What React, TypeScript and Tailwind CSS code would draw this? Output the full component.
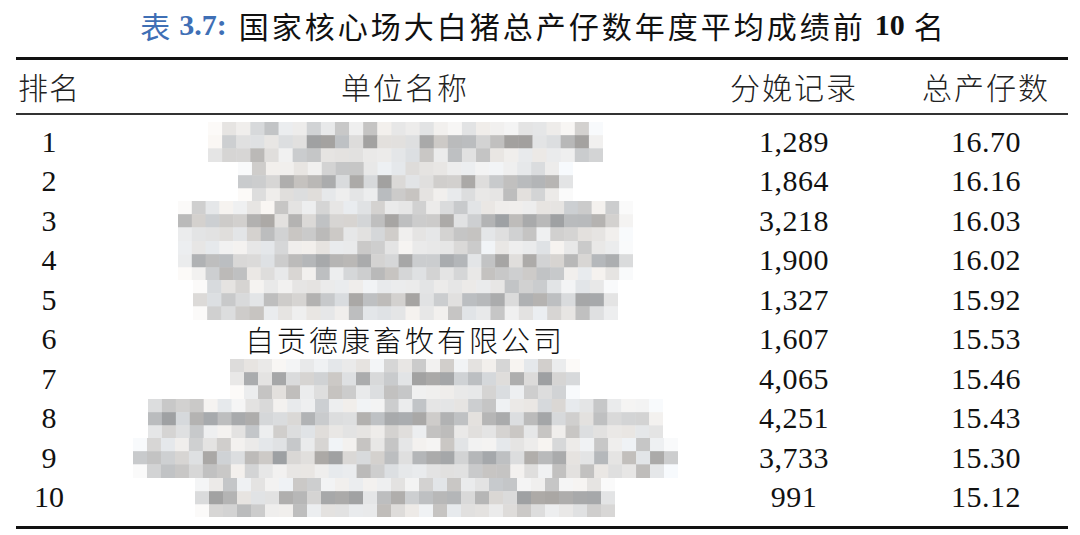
const serif = "font-['Liberation_Serif','Noto_Sans_CJK_SC',serif]";
const cjk = "font-['Noto_Sans_CJK_SC','Liberation_Sans',sans-serif]";

type Row = {
  rank: number;
  name: string | null;
  blur: number;
  births: string;
  total: string;
};

const rows: Row[] = [
  { rank: 1, name: null, blur: 395, births: "1,289", total: "16.70" },
  { rank: 2, name: null, blur: 335, births: "1,864", total: "16.16" },
  { rank: 3, name: null, blur: 455, births: "3,218", total: "16.03" },
  { rank: 4, name: null, blur: 455, births: "1,900", total: "16.02" },
  { rank: 5, name: null, blur: 425, births: "1,327", total: "15.92" },
  { rank: 6, name: "自贡德康畜牧有限公司", blur: 0, births: "1,607", total: "15.53" },
  { rank: 7, name: null, blur: 350, births: "4,065", total: "15.46" },
  { rank: 8, name: null, blur: 515, births: "4,251", total: "15.43" },
  { rank: 9, name: null, blur: 545, births: "3,733", total: "15.30" },
  { rank: 10, name: null, blur: 420, births: "991", total: "15.12" },
];

function mulberry32(a: number) {
  return function () {
    a |= 0;
    a = (a + 0x6d2b79f5) | 0;
    let t = Math.imul(a ^ (a >>> 15), 1 | a);
    t = (t + Math.imul(t ^ (t >>> 7), 61 | t)) ^ t;
    return ((t ^ (t >>> 14)) >>> 0) / 4294967296;
  };
}

// pixelated (redacted) company name
function Mosaic({ width, seed }: { width: number; seed: number }) {
  const rand = mulberry32(seed * 7919 + 13);
  const cols = Math.round(width / 14);
  const bw = width / cols;
  const bh = 39.5 / 3;
  const rects = [];
  for (let r = 0; r < 3; r++) {
    for (let c = 0; c < cols; c++) {
      const edge = c === 0 || c === cols - 1;
      let v: number;
      if (r === 1) v = rand() < 0.5 ? 160 + rand() * 35 : 200 + rand() * 30;
      else if (r === 0) v = rand() < 0.3 ? 195 + rand() * 25 : 226 + rand() * 20;
      else v = rand() < 0.4 ? 185 + rand() * 30 : 220 + rand() * 22;
      if (edge) v = Math.min(250, v + 25);
      const g = Math.round(v);
      const tint = Math.round((rand() - 0.5) * 6);
      rects.push(
        <rect
          key={`${r}-${c}`}
          x={c * bw}
          y={r * bh}
          width={bw + 0.5}
          height={bh + 0.5}
          fill={`rgb(${g + tint},${g},${g - tint})`}
        />
      );
    }
  }
  return (
    <svg width={width} height={39.5} className="block">
      {rects}
    </svg>
  );
}

export default function App() {
  return (
    <div className="w-[1080px] h-[535px] bg-white overflow-hidden px-[12px] pl-[16px] text-[#111]">
      <div className="h-[52px] flex items-center justify-center text-[30px] leading-none pb-[2px]">
        <span className={`${cjk} text-[#3f6fb5]`}>表</span>
        <span className={`${serif} font-bold text-[#3f6fb5] ml-[9px] mr-[12px]`}>3.7:</span>
        <span className={`${cjk} tracking-[3px]`}>国家核心场大白猪总产仔数年度平均成绩前</span>
        <span className={`${serif} font-bold mx-[9px]`}>10</span>
        <span className={cjk}>名</span>
      </div>

      <div className="mt-[5px] border-t-[3px] border-[#111]">
        <div className={`grid grid-cols-[66px_646px_132px_1fr] h-[53px] items-center text-[30px] ${cjk} font-light text-[#222]`}>
          <div className="text-center tracking-[1px]">排名</div>
          <div className="text-center tracking-[2px]">单位名称</div>
          <div className="text-center tracking-[2px]">分娩记录</div>
          <div className="text-center tracking-[2px] pl-[44px]">总产仔数</div>
        </div>
        <div className="border-t-2 border-[#333] pt-[7px] pb-[9px] border-b-[3px] border-b-[#111]">
          {rows.map((row) => (
            <div
              key={row.rank}
              className={`grid grid-cols-[66px_646px_132px_1fr] h-[39.5px] items-center text-[30px] leading-none ${serif}`}
            >
              <div className="text-center">{row.rank}</div>
              <div className="flex justify-center">
                {row.name ? (
                  <span className={`${cjk} font-light text-[29px] tracking-[3px]`}>{row.name}</span>
                ) : (
                  <Mosaic width={row.blur} seed={row.rank} />
                )}
              </div>
              <div className="text-center tracking-[0.5px]">{row.births}</div>
              <div className="text-center tracking-[0.5px] pl-[44px]">{row.total}</div>
            </div>
          ))}
        </div>
      </div>
    </div>
  );
}
